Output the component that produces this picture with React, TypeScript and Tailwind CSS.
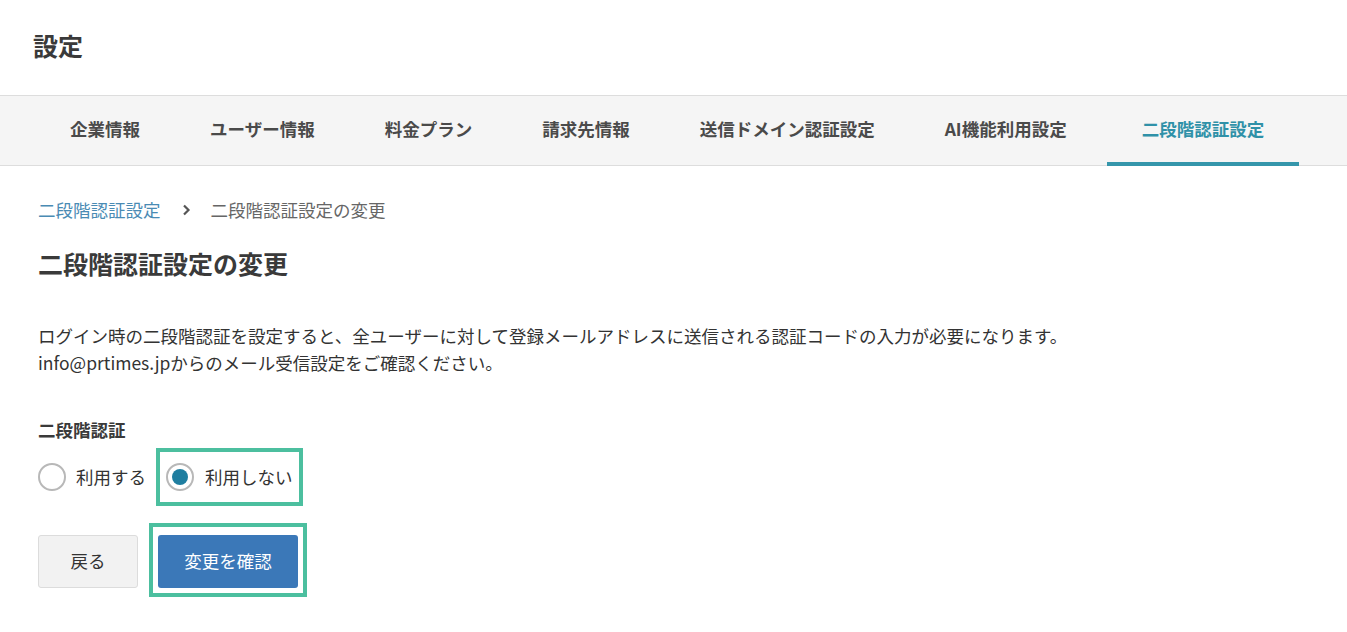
import { useState } from 'react';

const tabs = [
  { label: '企業情報', pr: 'pr-[35px]' },
  { label: 'ユーザー情報', pr: 'pr-[35px]' },
  { label: '料金プラン', pr: 'pr-[35px]' },
  { label: '請求先情報', pr: 'pr-[35px]' },
  { label: '送信ドメイン認証設定', pr: 'pr-[35px]' },
  { label: 'AI機能利用設定', pr: 'pr-[40px]' },
  { label: '二段階認証設定', pr: 'pr-[35px]' },
];

const Radio = ({ checked }: { checked: boolean }) => (
  <span className="flex h-[28px] w-[28px] items-center justify-center rounded-full border-2 border-[#b8b8b8] bg-white">
    {checked && <span className="h-[16px] w-[16px] rounded-full bg-[#1f7ea0]" />}
  </span>
);

export default function App() {
  const [enabled, setEnabled] = useState(false);
  const active = tabs.length - 1;

  return (
    <div
      className="min-h-[632px] bg-white text-[17.5px] text-[#333]"
      style={{ fontFamily: '"Noto Sans CJK JP", "Noto Sans", sans-serif' }}
    >
      {/* Header */}
      <div className="h-[95px] px-[33px] pt-[26px]">
        <h1 className="text-[25px] font-bold leading-[38px] text-[#3a3a3a]">設定</h1>
      </div>

      {/* Tabs */}
      <nav className="flex h-[71px] border-y border-[#dddddd] bg-[#f5f5f5] pl-[35px]">
        {tabs.map((tab, i) => (
          <div
            key={tab.label}
            className={`flex items-center pl-[35px] ${tab.pr} font-bold ${
              i === active
                ? 'mb-[-1px] border-b-4 border-[#3596ab] pt-[1px] text-[#2f91a8]'
                : 'pb-[3px] text-[#4a4a4a]'
            }`}
          >
            {tab.label}
          </div>
        ))}
      </nav>

      <main className="px-[38px]">
        {/* Breadcrumb */}
        <div className="mt-[31px] flex items-center gap-[20px] leading-[26px]">
          <a className="text-[#4a8bb4]">二段階認証設定</a>
          <svg width="10" height="12" viewBox="0 0 10 12" className="text-[#555]">
            <path d="M3 1.5 L7.5 6 L3 10.5" fill="none" stroke="currentColor" strokeWidth="2.2" />
          </svg>
          <span className="text-[#666]">二段階認証設定の変更</span>
        </div>

        <h2 className="mt-[21px] text-[25px] font-bold leading-[38px] text-[#3a3a3a]">
          二段階認証設定の変更
        </h2>

        <p className="mt-[40px] leading-[27px]">
          ログイン時の二段階認証を設定すると、全ユーザーに対して登録メールアドレスに送信される認証コードの入力が必要になります。
          <br />
          info@prtimes.jpからのメール受信設定をご確認ください。
        </p>

        <div className="mt-[41px] font-bold leading-[26px] text-[#3a3a3a]">二段階認証</div>

        {/* Radios */}
        <div className="mt-[7px] flex h-[54px] items-center">
          <label className="flex cursor-pointer items-center gap-[10px]" onClick={() => setEnabled(true)}>
            <Radio checked={enabled} />
            <span>利用する</span>
          </label>
          <label
            className="relative ml-[20px] flex cursor-pointer items-center gap-[11px]"
            onClick={() => setEnabled(false)}
          >
            <Radio checked={!enabled} />
            <span>利用しない</span>
            <span className="pointer-events-none absolute left-[-10px] right-[-10px] top-[-15px] bottom-[-15px] border-4 border-[#4cbf9f]" />
          </label>
        </div>

        {/* Buttons */}
        <div className="mt-[31px] flex items-center gap-[20px]">
          <button className="h-[53px] w-[100px] rounded-[3px] border border-[#dcdcdc] bg-[#f2f2f2] text-[#333]">
            戻る
          </button>
          <div className="relative">
            <button className="h-[53px] w-[140px] rounded-[3px] bg-[#3b78b8] text-white">変更を確認</button>
            <span className="pointer-events-none absolute left-[-9px] right-[-9px] top-[-12px] bottom-[-9px] border-4 border-[#4cbf9f]" />
          </div>
        </div>
      </main>
    </div>
  );
}
